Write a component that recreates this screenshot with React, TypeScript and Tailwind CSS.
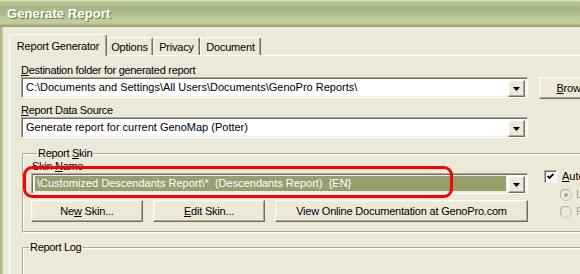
import React from "react";

const raised =
  "bg-[#ece9d8] border border-t-white border-l-white border-r-[#716f64] border-b-[#716f64] shadow-[inset_-1px_-1px_0_#aca899,inset_1px_1px_0_#f1efe2]";
const sunken =
  "border border-t-[#aca899] border-l-[#aca899] border-r-white border-b-white shadow-[inset_1px_1px_0_#716f64,inset_-1px_-1px_0_#f1efe2]";

function DropBtn() {
  return (
    <div className={`w-[17px] h-[17px] shrink-0 flex items-center justify-center ${raised}`}>
      <svg width="7" height="4" viewBox="0 0 7 4">
        <path d="M0 0H7L3.5 4Z" fill="#000" />
      </svg>
    </div>
  );
}

function Combo({ text, width, selected }: { text: string; width: string; selected?: boolean }) {
  return (
    <div className={`${width} h-[21px] shrink-0 bg-white flex items-stretch p-[2px] ${sunken}`}>
      <div className="flex-1 min-w-0 flex items-center pl-[1px] pr-[2px]">
        {selected ? (
          <div className="w-full h-[15px] bg-[#969f6d] text-white flex items-center pl-[2px] outline outline-1 outline-dotted outline-[#d9dcc4] whitespace-pre">
            {text}
          </div>
        ) : (
          <div className="pl-[1px] whitespace-pre">{text}</div>
        )}
      </div>
      <DropBtn />
    </div>
  );
}

function Button({ children, width }: { children: React.ReactNode; width: string }) {
  return (
    <div className={`${width} h-[22px] shrink-0 flex items-center justify-center whitespace-pre tracking-[-0.2px] ${raised}`}>
      {children}
    </div>
  );
}

function Radio({ checked, label }: { checked?: boolean; label: string }) {
  return (
    <div className="flex items-center gap-[4px] h-[13px]">
      <svg width="12" height="12" viewBox="0 0 12 12">
        <circle cx="6" cy="6" r="5.5" fill="#ece9d8" stroke="#c9c6b6" />
        <path d="M1.5 9A5 5 0 0 1 9 1.5" fill="none" stroke="#aca899" />
        {checked && <circle cx="6" cy="6" r="2" fill="#aca899" />}
      </svg>
      <span className="text-[#aca899]">{label}</span>
    </div>
  );
}

export default function App() {
  return (
    <div className="w-[580px] h-[274px] overflow-hidden relative bg-[#ece9d8] flex flex-col font-['Liberation_Sans',Arial,sans-serif] text-[11px] leading-[13px] text-black">
      {/* title bar */}
      <div className="h-[27px] shrink-0 flex items-center pl-[7px] bg-[linear-gradient(to_bottom,#e4ebc6_0px,#b7c595_2px,#a8b787_8px,#abba89_13px,#bcc796_18px,#c6ce9c_23px,#a4b382_25px,#8d9c6b_27px)]">
        <span className="font-bold text-[13px] leading-[16px] text-white [text-shadow:1px_1px_0_#6b7a4c] tracking-[0.1px]">
          Generate Report
        </span>
      </div>

      <div className="flex flex-1 min-h-0">
        <div className="w-[3px] shrink-0 bg-[linear-gradient(to_right,#9fae7e,#b6c291,#c9d1a1)]" />
        <div className="flex-1 min-w-0 pl-[6px] pt-[7px] flex flex-col">
          {/* tabs */}
          <div className="h-[21px] flex items-end shrink-0 tracking-[-0.2px]">
            <div className="relative z-10 w-[98px] h-[22px] -mb-px bg-[#ece9d8] border-t border-l border-white border-r border-r-[#716f64] rounded-t-[3px] shadow-[inset_-1px_0_0_#aca899] flex items-start justify-center pt-[5px]">
              Report Generator
            </div>
            <div className="w-[46px] h-[18px] border-t border-white border-r border-r-[#716f64] rounded-tr-[2px] shadow-[inset_-1px_0_0_#aca899] flex items-start justify-center pt-[3px]">
              Options
            </div>
            <div className="w-[47px] h-[18px] border-t border-l border-white border-r border-r-[#716f64] rounded-t-[2px] shadow-[inset_-1px_0_0_#aca899] flex items-start justify-center pt-[3px]">
              Privacy
            </div>
            <div className="w-[61px] h-[18px] border-t border-l border-white border-r border-r-[#716f64] rounded-t-[2px] shadow-[inset_-1px_0_0_#aca899] flex items-start justify-center pt-[3px]">
              Document
            </div>
          </div>

          {/* panel */}
          <div className="flex-1 border-t border-l border-white pl-[11px] pt-[8px] flex flex-col">
            <div className="tracking-[-0.3px]">
              <u className="underline-offset-[1px]">D</u>estination folder for generated report
            </div>
            <div className="flex items-start gap-[11px] mt-[0px]">
              <Combo width="w-[507px]" text="C:\Documents and Settings\All Users\Documents\GenoPro Reports\" />
              <Button width="w-[79px]">
                <span>
                  <u>B</u>rowse...
                </span>
              </Button>
            </div>

            <div className="mt-[5px] tracking-[-0.3px]">
              <u>R</u>eport Data Source
            </div>
            <Combo width="w-[507px]" text="Generate report for current GenoMap (Potter)" />

            {/* Report Skin group */}
            <fieldset className="mt-[9px] ml-[1px] w-[620px] shrink-0 border border-[#aca899] shadow-[inset_1px_1px_0_#fff,1px_1px_0_#fff] pl-[8px] pb-[9px]">
              <legend className="ml-[6px] px-[1px] bg-[#ece9d8] tracking-[-0.3px]">
                Report <u>S</u>kin
              </legend>
              <div className="flex gap-[15px]">
                <div className="flex flex-col w-[497px] shrink-0">
                  <div className="pl-[1px] tracking-[-0.3px]">
                    Skin <u>N</u>ame
                  </div>
                  <Combo
                    width="w-[497px]"
                    selected
                    text={"\\Customized Descendants Report\\*  (Descendants Report)  {EN}"}
                  />
                  <div className="flex gap-[10px] mt-[6px]">
                    <Button width="w-[112px]">
                      <span>
                        Ne<u>w</u> Skin...
                      </span>
                    </Button>
                    <Button width="w-[112px]">
                      <span>
                        <u>E</u>dit Skin...
                      </span>
                    </Button>
                    <Button width="w-[253px]">View Online Documentation at GenoPro.com</Button>
                  </div>
                </div>
                <div className="flex flex-col pt-[10px]">
                  <div className="flex items-center gap-[5px] ml-[1px]">
                    <div className={`w-[13px] h-[13px] bg-white flex items-center justify-center ${sunken}`}>
                      <svg width="7" height="7" viewBox="0 0 7 7">
                        <path d="M0.5 3L2.5 5L6.5 1" fill="none" stroke="#000" strokeWidth="1.8" />
                      </svg>
                    </div>
                    <span>
                      <u>A</u>utomatic
                    </span>
                  </div>
                  <div className="ml-[17px] mt-[5px] flex flex-col gap-[4px]">
                    <Radio checked label="Language" />
                    <Radio label="Fixed" />
                  </div>
                </div>
              </div>
            </fieldset>

            {/* Report Log group */}
            <fieldset className="mt-[9px] ml-[1px] w-[620px] h-[60px] shrink-0 border border-[#aca899] shadow-[inset_1px_1px_0_#fff,1px_1px_0_#fff]">
              <legend className="ml-[6px] px-[1px] bg-[#ece9d8] tracking-[-0.3px]">Report Log</legend>
            </fieldset>
          </div>
        </div>
      </div>

      {/* red annotation */}
      <div className="absolute left-[23px] top-[166px] w-[430px] h-[32px] border-[3px] border-[#ff0000] rounded-[9px] pointer-events-none" />
    </div>
  );
}
